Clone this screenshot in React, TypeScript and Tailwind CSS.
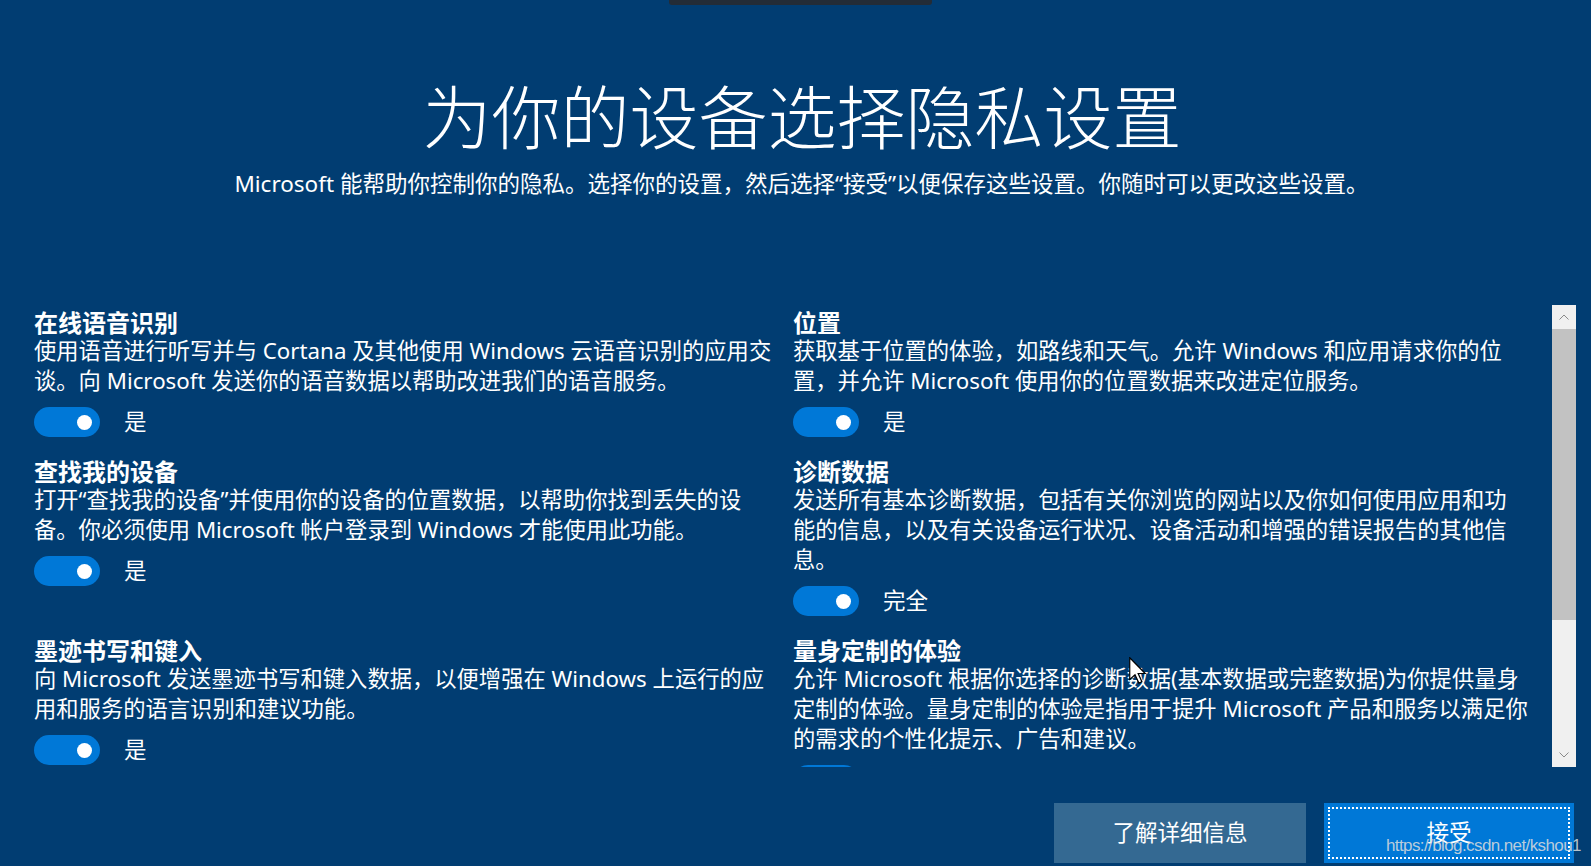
import type { ReactNode } from "react";

interface Setting {
  title: string;
  lines: string[];
  label: string;
}

const leftColumn: Setting[] = [
  {
    title: "在线语音识别",
    lines: [
      "使用语音进行听写并与 Cortana 及其他使用 Windows 云语音识别的应用交",
      "谈。向 Microsoft 发送你的语音数据以帮助改进我们的语音服务。",
    ],
    label: "是",
  },
  {
    title: "查找我的设备",
    lines: [
      "打开“查找我的设备”并使用你的设备的位置数据，以帮助你找到丢失的设",
      "备。你必须使用 Microsoft 帐户登录到 Windows 才能使用此功能。",
    ],
    label: "是",
  },
  {
    title: "墨迹书写和键入",
    lines: [
      "向 Microsoft 发送墨迹书写和键入数据，以便增强在 Windows 上运行的应",
      "用和服务的语言识别和建议功能。",
    ],
    label: "是",
  },
];

const rightColumn: Setting[] = [
  {
    title: "位置",
    lines: [
      "获取基于位置的体验，如路线和天气。允许 Windows 和应用请求你的位",
      "置，并允许 Microsoft 使用你的位置数据来改进定位服务。",
    ],
    label: "是",
  },
  {
    title: "诊断数据",
    lines: [
      "发送所有基本诊断数据，包括有关你浏览的网站以及你如何使用应用和功",
      "能的信息，以及有关设备运行状况、设备活动和增强的错误报告的其他信",
      "息。",
    ],
    label: "完全",
  },
  {
    title: "量身定制的体验",
    lines: [
      "允许 Microsoft 根据你选择的诊断数据(基本数据或完整数据)为你提供量身",
      "定制的体验。量身定制的体验是指用于提升 Microsoft 产品和服务以满足你",
      "的需求的个性化提示、广告和建议。",
    ],
    label: "是",
  },
];

function Toggle({ label }: { label: string }) {
  return (
    <div className="mt-[11px] flex h-[30px] items-center">
      <div className="flex h-[30px] w-[66px] items-center justify-end rounded-full bg-[#0078d7] pr-[8px]">
        <div className="h-[15px] w-[15px] rounded-full bg-white" />
      </div>
      <span className="ml-[24px] text-[22.5px] leading-[30px]">{label}</span>
    </div>
  );
}

function SettingItem({ item }: { item: Setting }) {
  return (
    <div>
      <div className="text-[24px] font-bold leading-[26px]">{item.title}</div>
      {item.lines.map((line) => (
        <div key={line} className="whitespace-nowrap text-[22.3px] leading-[30px]">
          {line}
        </div>
      ))}
      <Toggle label={item.label} />
    </div>
  );
}

function ScrollButton({ children }: { children: ReactNode }) {
  return <div className="flex h-[24px] items-center justify-center">{children}</div>;
}

export default function App() {
  const rows = leftColumn.map((item, i) => [item, rightColumn[i]]).flat();

  return (
    <div className="relative h-[866px] w-full overflow-hidden bg-[#013d72] font-['Noto_Sans','Noto_Sans_CJK_SC',sans-serif] text-white">
      <div className="ml-[669px] h-[5px] w-[263px] rounded-b-[3px] bg-[#232c37]" />

      <h1 className="mt-[71px] pl-[13px] text-center font-['Noto_Sans_CJK_SC_Light','Noto_Sans_CJK_SC',sans-serif] text-[69px] font-light leading-[76px]">
        为你的设备选择隐私设置
      </h1>
      <p className="mt-[17px] pl-[12px] text-center text-[22.5px] leading-[30px]">
        Microsoft 能帮助你控制你的隐私。选择你的设置，然后选择“接受”以便保存这些设置。你随时可以更改这些设置。
      </p>

      <div className="mt-[106px] flex h-[462px] pl-[34px] pr-[15px]">
        <div className="flex-1 overflow-hidden pt-[5px]">
          <div className="grid grid-cols-[735px_740px] gap-x-[24px] gap-y-[22px]">
            {rows.map((item) => (
              <SettingItem key={item.title} item={item} />
            ))}
          </div>
        </div>

        <div className="flex w-[24px] shrink-0 flex-col bg-[#f0f0f0]">
          <ScrollButton>
            <svg width="10" height="6" viewBox="0 0 10 6" fill="none" stroke="#8a8a8a" strokeWidth="1">
              <path d="M0.5 5.5 L5 1 L9.5 5.5" />
            </svg>
          </ScrollButton>
          <div className="h-[291px] bg-[#c2c2c2]" />
          <div className="flex-1" />
          <ScrollButton>
            <svg width="10" height="6" viewBox="0 0 10 6" fill="none" stroke="#8a8a8a" strokeWidth="1">
              <path d="M0.5 0.5 L5 5 L9.5 0.5" />
            </svg>
          </ScrollButton>
        </div>
      </div>

      <div className="mt-[36px] flex justify-end gap-[18px] pr-[17px]">
        <button className="h-[60px] w-[252px] bg-[#346992] text-[22.5px] text-white">了解详细信息</button>
        <button className="h-[60px] w-[250px] bg-[#0078d7] p-[4px] text-[22.5px] text-white">
          <div className="flex h-full items-center justify-center border-2 border-dotted border-white">接受</div>
        </button>
      </div>

      {/* mouse pointer */}
      <svg className="absolute left-[1129px] top-[657px]" width="18" height="27" viewBox="0 0 12 18">
        <path d="M0.5 0.5 L0.5 15 L4 11.8 L6.6 17.4 L8.6 16.5 L6.1 11 L10.8 11 Z" fill="white" stroke="black" strokeWidth="0.8" />
      </svg>

      {/* watermark */}
      <div className="absolute left-[1386px] top-[837px] whitespace-nowrap font-['Liberation_Sans',sans-serif] text-[17px] leading-[17px] tracking-[-0.6px] text-[#dcdcdc]/85">
        https://blog.csdn.net/kshou1
      </div>
    </div>
  );
}
